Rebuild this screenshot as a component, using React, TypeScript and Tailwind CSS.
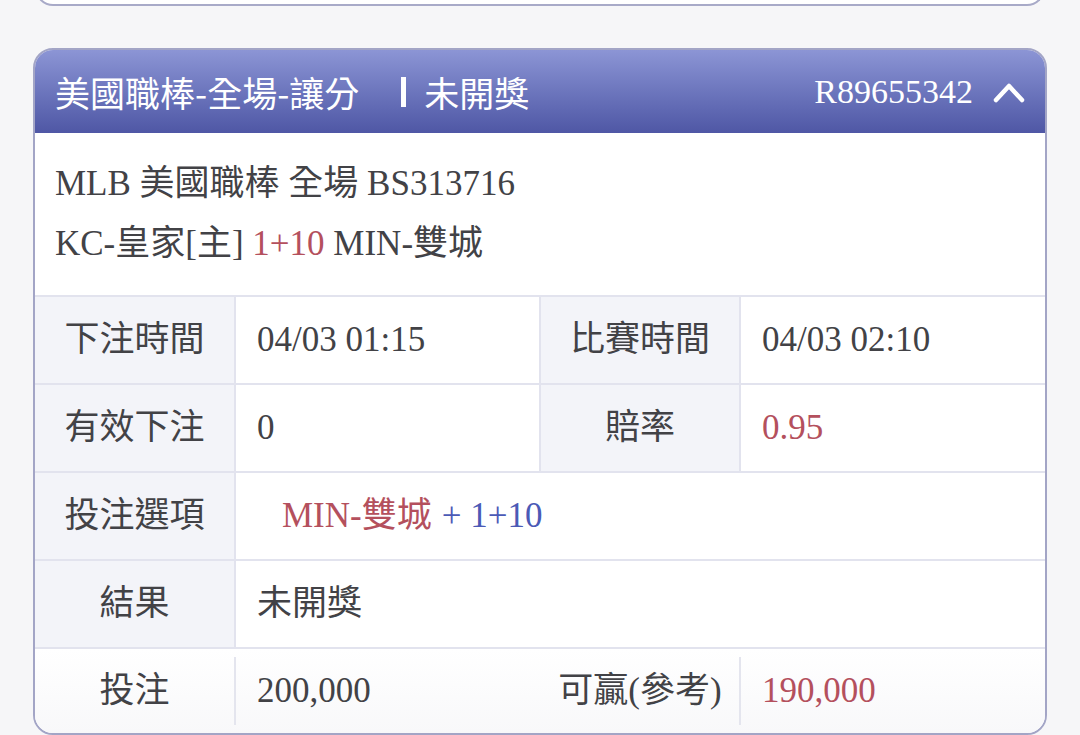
import React from "react";

const serif = "font-['Liberation_Serif','Noto_Sans_CJK_TC',serif]";
const sans = "font-['Noto_Sans_CJK_TC','Noto_Sans',sans-serif]";

function Label({ children, w, className = "" }: { children: React.ReactNode; w: string; className?: string }) {
  return (
    <div className={`${w} flex items-center justify-center bg-[#f3f4f9] border-r-2 border-[#e2e3ee] ${className}`}>
      {children}
    </div>
  );
}

export default function App() {
  return (
    <div className={`min-h-[735px] w-[1080px] overflow-hidden bg-[#f6f6f8] ${serif} text-[35px] text-[#424246]`}>
      {/* previous card tail */}
      <div className="mx-[35px] -mt-[40px] h-[46px] rounded-b-[18px] border-x-2 border-b-2 border-[#a8aac8] bg-white" />

      <div className="mx-[33px] mt-[42px] overflow-hidden rounded-[20px] border-2 border-[#a3a5c6] bg-white">
        {/* header */}
        <div className="flex h-[83px] items-center bg-gradient-to-b from-[#8c95d5] to-[#4f57a5] pl-[20px] pr-[20px] text-white">
          <span className={`${sans} leading-none`}>美國職棒-全場-讓分</span>
          <span className="ml-[42px] mr-[18px] h-[30px] w-[5px] bg-white" />
          <span className={`${sans} leading-none`}>未開獎</span>
          <span className="ml-auto text-[34px] leading-none">R89655342</span>
          <svg className="ml-[20px]" width="32" height="22" viewBox="0 0 32 22" fill="none">
            <path d="M3 19 L16 5 L29 19" stroke="white" strokeWidth="4.5" strokeLinecap="round" strokeLinejoin="round" />
          </svg>
        </div>

        {/* info */}
        <div className="flex h-[162px] flex-col justify-center gap-[14px] pl-[20px] leading-[46px]">
          <div>MLB 美國職棒 全場 BS313716</div>
          <div>
            KC-皇家[主] <span className="text-[#b4505d]">1+10</span> MIN-雙城
          </div>
        </div>

        {/* rows */}
        <div className="flex h-[88px] border-t-2 border-[#e2e3ee]">
          <Label w="w-[201px]">下注時間</Label>
          <div className="flex w-[305px] items-center border-r-2 border-[#e2e3ee] pl-[21px]">04/03 01:15</div>
          <Label w="w-[200px]">比賽時間</Label>
          <div className="flex flex-1 items-center pl-[21px]">04/03 02:10</div>
        </div>
        <div className="flex h-[88px] border-t-2 border-[#e2e3ee]">
          <Label w="w-[201px]">有效下注</Label>
          <div className="flex w-[305px] items-center border-r-2 border-[#e2e3ee] pl-[21px]">0</div>
          <Label w="w-[200px]">賠率</Label>
          <div className="flex flex-1 items-center pl-[21px] text-[#b4505d]">0.95</div>
        </div>
        <div className="flex h-[88px] border-t-2 border-[#e2e3ee]">
          <Label w="w-[201px]">投注選項</Label>
          <div className="flex flex-1 items-center pl-[46px]">
            <span className="text-[#b4505d]">MIN-雙城</span>
            <span className="ml-[10px] text-[#4b5ab6]">+ 1+10</span>
          </div>
        </div>
        <div className="flex h-[88px] border-t-2 border-[#e2e3ee]">
          <Label w="w-[201px]">結果</Label>
          <div className="flex flex-1 items-center pl-[21px]">未開獎</div>
        </div>
        <div className="flex h-[86px] items-center border-t-2 border-[#e2e3ee] bg-gradient-to-b from-white to-[#f8f8fa]">
          <div className="flex w-[199px] justify-center">投注</div>
          <div className="h-[68px] w-[2px] bg-[#e4e5ee]" />
          <div className="w-[305px] pl-[21px]">200,000</div>
          <div className="flex w-[198px] justify-center">可贏(參考)</div>
          <div className="h-[68px] w-[2px] bg-[#e4e5ee]" />
          <div className="flex-1 pl-[21px] text-[#b4505d]">190,000</div>
        </div>
      </div>
    </div>
  );
}
